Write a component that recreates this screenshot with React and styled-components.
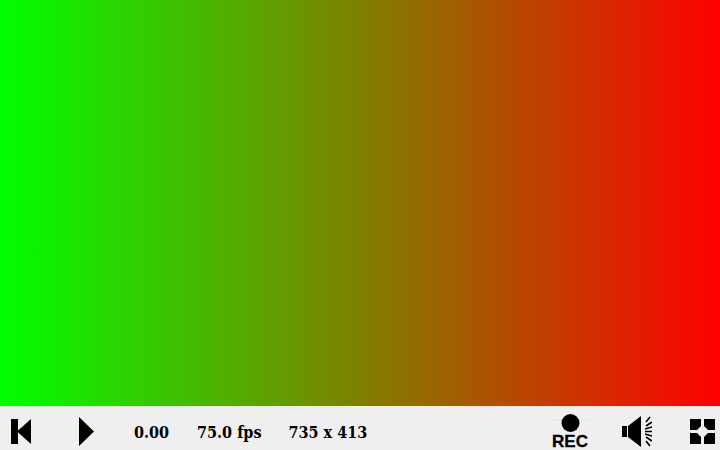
import React from "react";
import styled, { createGlobalStyle } from "styled-components";

const Global = createGlobalStyle`
  html, body { margin: 0; padding: 0; background: #efefef; }
`;
const Player = styled.div`
  width: 720px; height: 450px; display: flex; flex-direction: column; overflow: hidden;
`;
const Video = styled.div`
  flex: 0 0 406px;
  background: linear-gradient(to right, #00ff00, #ff0000);
`;
const Controls = styled.div`
  flex: 1; display: flex; align-items: center; background: #efefef;
  padding: 6px 5px 0 11px;
  font-family: "DejaVu Serif Condensed", "DejaVu Serif", serif; font-weight: 700; font-size: 16px; font-stretch: condensed; color: #000;
`;
const Icon = styled.svg`
  display: block; flex: 0 0 auto; margin-left: ${p => p.$ml || 0}px;
  filter: blur(0.45px);
`;
const Stat = styled.span`
  margin-left: ${p => p.$ml}px; white-space: nowrap; line-height: 18px; margin-top: 3px;
`;
const Rec = styled.div`
  margin-left: auto; width: 40px; display: flex; flex-direction: column; align-items: center;
`;
const RecLabel = styled.span`
  font-family: "Liberation Sans", sans-serif; font-weight: 700; font-size: 17px; line-height: 14px; font-stretch: normal;
  margin-top: 2px; -webkit-text-stroke: 0.3px #000;
`;

export default function App() {
  return (
    <Player>
      <Global />
      <Video />
      <Controls>
        <Icon width="20" height="25" viewBox="0 0 20 25">
          <path d="M0 0h7v25H0zM6 12.500L20 0v25z" fill="#000" />
        </Icon>
        <Icon $ml={48} width="15" height="29" viewBox="0 0 15 29">
          <path d="M0 0l15 14.500L0 29z" fill="#000" />
        </Icon>
        <Stat $ml={40}>0.00</Stat>
        <Stat $ml={28}>75.0 fps</Stat>
        <Stat $ml={27}>735 x 413</Stat>
        <Rec>
          <Icon width="40" height="19" viewBox="0 0 40 19">
            <path d="M0 6h40" stroke="#e9e9e9" strokeWidth="2" />
            <circle cx="20.5" cy="9" r="9" fill="#000" />
          </Icon>
          <RecLabel>REC</RecLabel>
        </Rec>
        <Icon $ml={32} width="30" height="31" viewBox="0 0 30 31">
          <path d="M0 10h5v11H0zM6 10l13-10v31L6 21z" fill="#000" />
          <path d="M28 1l-4 5M30 6l-6 4M30 11l-7 2M30 15.500h-7M30 20l-7-2M30 25l-6-4M28 30l-4-5" stroke="#000" strokeWidth="1.6" fill="none" />
        </Icon>
        <Icon $ml={38} width="25" height="25" viewBox="0 0 25 25">
          <path d="M0 0h11v7l-4 4H0zM14 0h11v11h-7l-4-4zM0 14h7l4 4v7H0zM18 14h7v11H14v-7z" fill="#000" />
        </Icon>
      </Controls>
    </Player>
  );
}
